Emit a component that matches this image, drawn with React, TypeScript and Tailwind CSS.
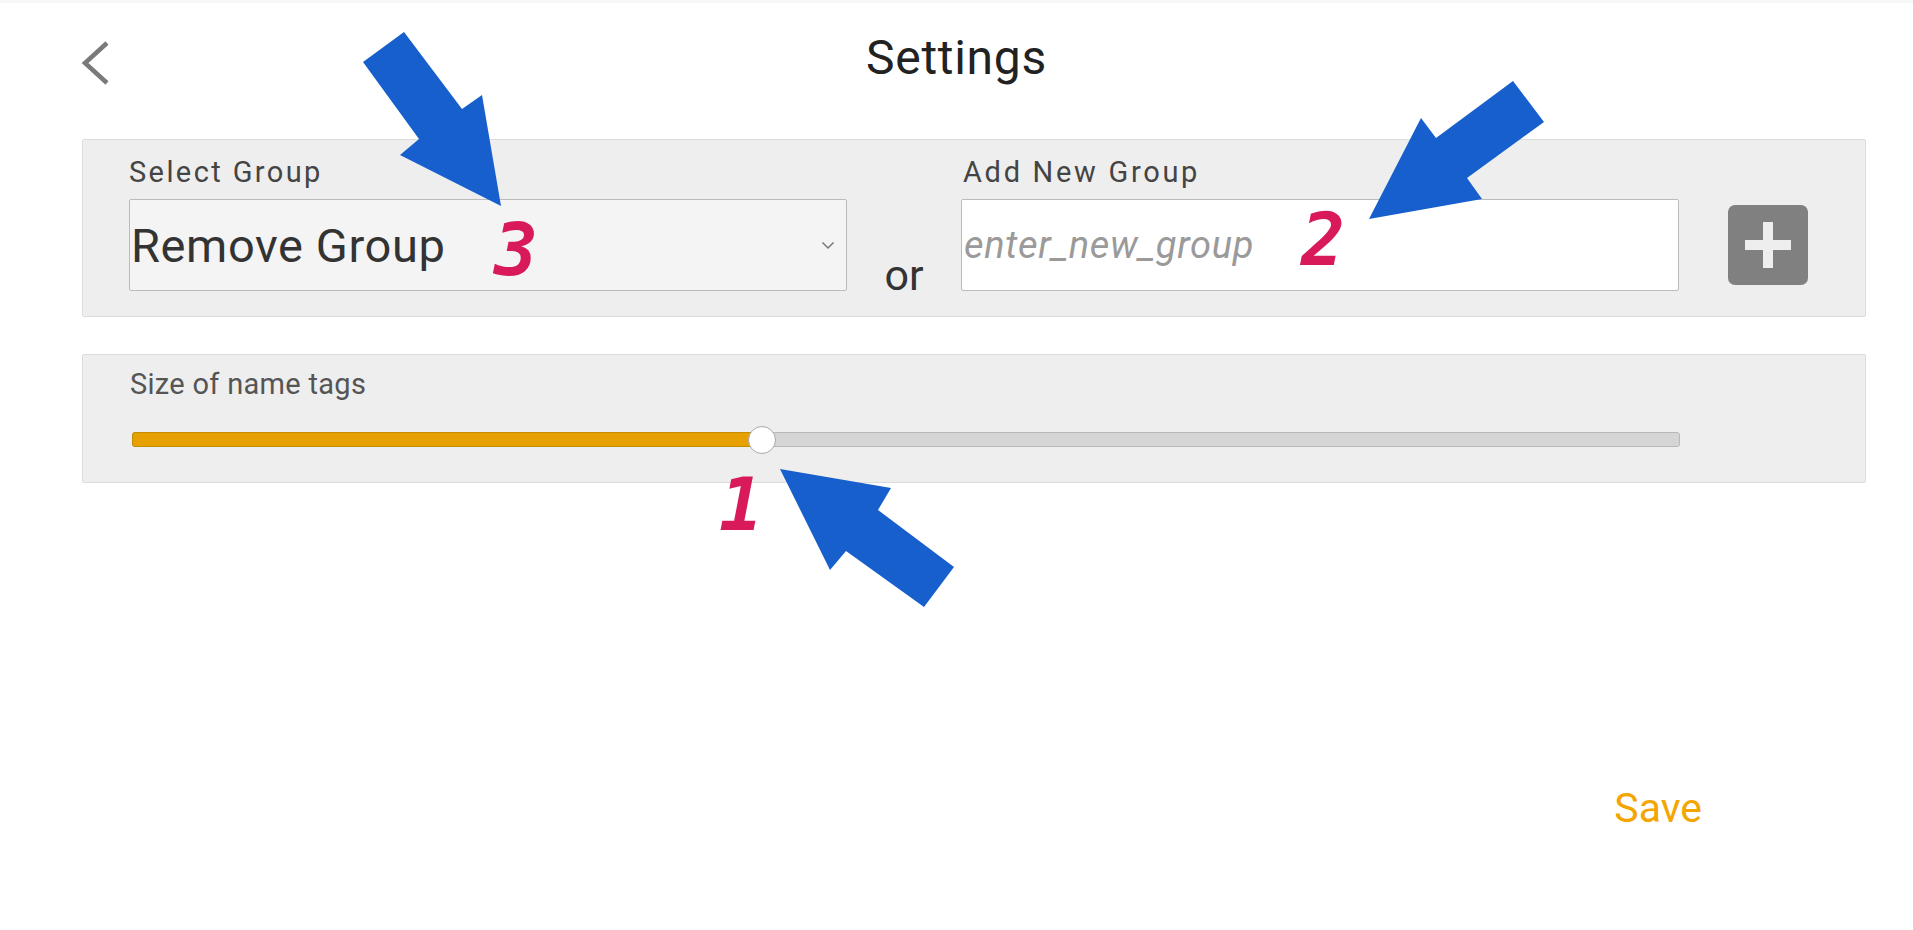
export default function App() {
    return (
        <div className="relative w-[1913px] h-[930px] bg-white font-['Roboto',sans-serif] overflow-hidden">
            <div className="h-[3px] bg-[#f7f7f7]"></div>

            {/* header */}
            <header className="grid grid-cols-[1fr_auto_1fr] h-[136px]">
                <div className="pl-[80px] pt-[36px]">
                    <svg width="32" height="48" viewBox="0 0 32 48" fill="none">
                        <polyline points="27,4 5,24 27,44" stroke="#7a7a7a" strokeWidth="4.5" />
                    </svg>
                </div>
                <h1 className="pt-[27px] text-[48px] leading-[56px] tracking-[0.7px] text-[#222]">Settings</h1>
                <div></div>
            </header>

            {/* group panel */}
            <div className="ml-[82px] w-[1784px] border border-[#dcdcdc] bg-[#eeeeee] rounded-[2px] flex items-end pl-[46px] pt-[15px] pb-[25px]">
                <div className="w-[718px]">
                    <div className="text-[29px] leading-[34px] tracking-[2.4px] text-[#444] mb-[10px]">Select Group</div>
                    <div className="h-[92px] border border-[#bbbbbb] bg-[#f4f4f4] rounded-[2px] flex items-center justify-between pl-[1px] pr-[11px]">
                        <span className="text-[47px] leading-none tracking-[0.6px] text-[#333]">Remove Group</span>
                        <svg width="14" height="9" viewBox="0 0 14 9" fill="none">
                            <polyline points="1.5,1.5 7,7 12.5,1.5" stroke="#777" strokeWidth="1.5" />
                        </svg>
                    </div>
                </div>
                <div className="w-[114px] text-center text-[43px] leading-none text-[#333] mb-[-6px]">or</div>
                <div className="w-[718px]">
                    <div className="pl-[2px] text-[29px] leading-[34px] tracking-[2.7px] text-[#444] mb-[10px]">Add New Group</div>
                    <input
                        className="block w-full h-[92px] border border-[#bbbbbb] bg-white rounded-[2px] pl-[2px] text-[38px] tracking-[0.7px] text-[#333] outline-none placeholder:italic placeholder:text-[#9a9a9a]"
                        placeholder="enter_new_group"
                    />
                </div>
                <button className="ml-[49px] mb-[6px] w-[80px] h-[80px] rounded-[7px] bg-[#808080] flex items-center justify-center">
                    <svg width="80" height="80" viewBox="0 0 80 80">
                        <rect x="17" y="35" width="46" height="10" fill="#eeeeee" />
                        <rect x="35" y="17" width="10" height="46" fill="#eeeeee" />
                    </svg>
                </button>
            </div>

            {/* slider panel */}
            <div className="ml-[82px] mt-[37px] w-[1784px] border border-[#dcdcdc] bg-[#eeeeee] rounded-[2px] pl-[47px] pt-[12px] pb-[35px]">
                <div className="text-[29px] leading-[34px] tracking-[0.3px] text-[#555]">Size of name tags</div>
                <div className="mt-[31px] ml-[2px] relative w-[1548px] h-[15px] rounded-[3px] border border-[#b8b8b8] bg-[#d5d5d5]">
                    <div className="absolute -left-px -top-px -bottom-px w-[40.7%] rounded-l-[3px] border border-[#c48c00] bg-[#e6a000]"></div>
                    <div className="absolute left-[40.7%] top-[-7.5px] -translate-x-1/2 w-[28px] h-[28px] rounded-full border-[1.5px] border-[#a8a8a8] bg-white"></div>
                </div>
            </div>

            {/* footer */}
            <div className="flex justify-end pr-[211px] mt-[305px]">
                <button className="text-[41px] leading-none text-[#f3a600]">Save</button>
            </div>

            {/* annotation arrows */}
            <svg className="absolute left-0 top-0 pointer-events-none" width="1913" height="930" viewBox="0 0 1913 930">
                <polygon points="363,62 404,32 462,109 482,95 501,206 400,155 419,139" fill="#175fcd" />
                <polygon points="1513,81 1544,122 1467,178 1482,199 1369,219 1421,118 1436,138" fill="#175fcd" />
                <polygon points="780,469 891,488 878,510 954,567 924,607 846,551 830,570" fill="#175fcd" />
            </svg>
            <span className="absolute left-[494px] top-[213px] font-['DejaVu_Sans_Mono',monospace] font-bold italic text-[73px] leading-none text-[#d81a5b]">3</span>
            <span className="absolute left-[1301px] top-[203px] font-['DejaVu_Sans_Mono',monospace] font-bold italic text-[73px] leading-none text-[#d81a5b]">2</span>
            <span className="absolute left-[719px] top-[468px] font-['DejaVu_Sans_Mono',monospace] font-bold italic text-[73px] leading-none text-[#d81a5b]">1</span>
        </div>
    );
}
